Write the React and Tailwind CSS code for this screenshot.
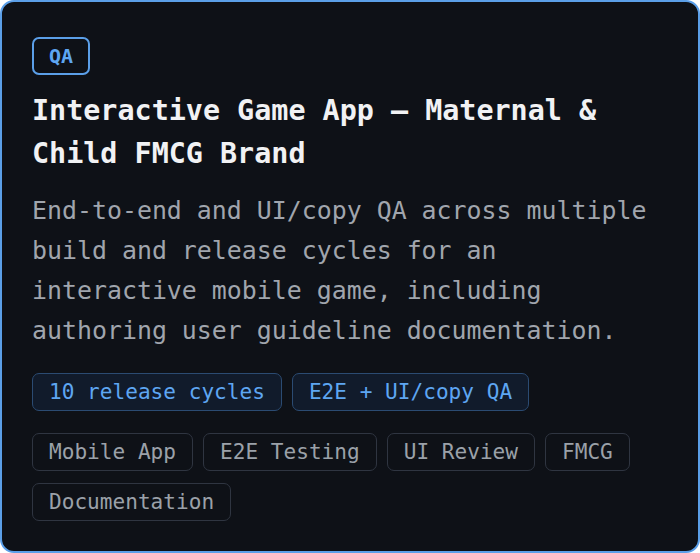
export default function App() {
    const metrics = ["10 release cycles", "E2E + UI/copy QA"];
    const tags = ["Mobile App", "E2E Testing", "UI Review", "FMCG", "Documentation"];

    return (
        <div className="w-[700px] h-[553px] bg-white">
            <div className="w-full h-full rounded-[14px] border-2 border-[#5b9fe8] bg-[#0e1117] pl-[30px] pr-[30px] pt-[35px] font-['DejaVu_Sans_Mono',monospace]">
                {/* Category badge */}
                <div className="flex">
                    <span className="h-[38px] flex items-center px-[15px] rounded-[7px] border-2 border-[#5b9fe8] text-[20px] font-bold text-[#5ea6f2]">
                        QA
                    </span>
                </div>

                <h3 className="mt-[14px] text-[28.4px] leading-[43px] font-bold text-[#f1f2f4]">
                    Interactive Game App — Maternal &amp; Child FMCG Brand
                </h3>

                <p className="mt-4 text-[24.9px] leading-[40px] text-[#a0a5ad]">
                    End-to-end and UI/copy QA across multiple build and release cycles for an interactive mobile game, including authoring user guideline documentation.
                </p>

                <div className="mt-[22px] flex flex-wrap gap-2.5">
                    {metrics.map((m) => (
                        <span key={m} className="h-[38px] flex items-center px-4 rounded-[7px] border border-[#2b4b72] bg-[#111b2b] text-[21.1px] text-[#5ea6f2]">
                            {m}
                        </span>
                    ))}
                </div>

                <div className="mt-[22px] flex flex-wrap gap-x-2.5 gap-y-3">
                    {tags.map((t) => (
                        <span key={t} className="h-[38px] flex items-center px-4 rounded-[7px] border border-[#2f3541] text-[21.1px] text-[#9ba1a9]">
                            {t}
                        </span>
                    ))}
                </div>
            </div>
        </div>
    )
}
